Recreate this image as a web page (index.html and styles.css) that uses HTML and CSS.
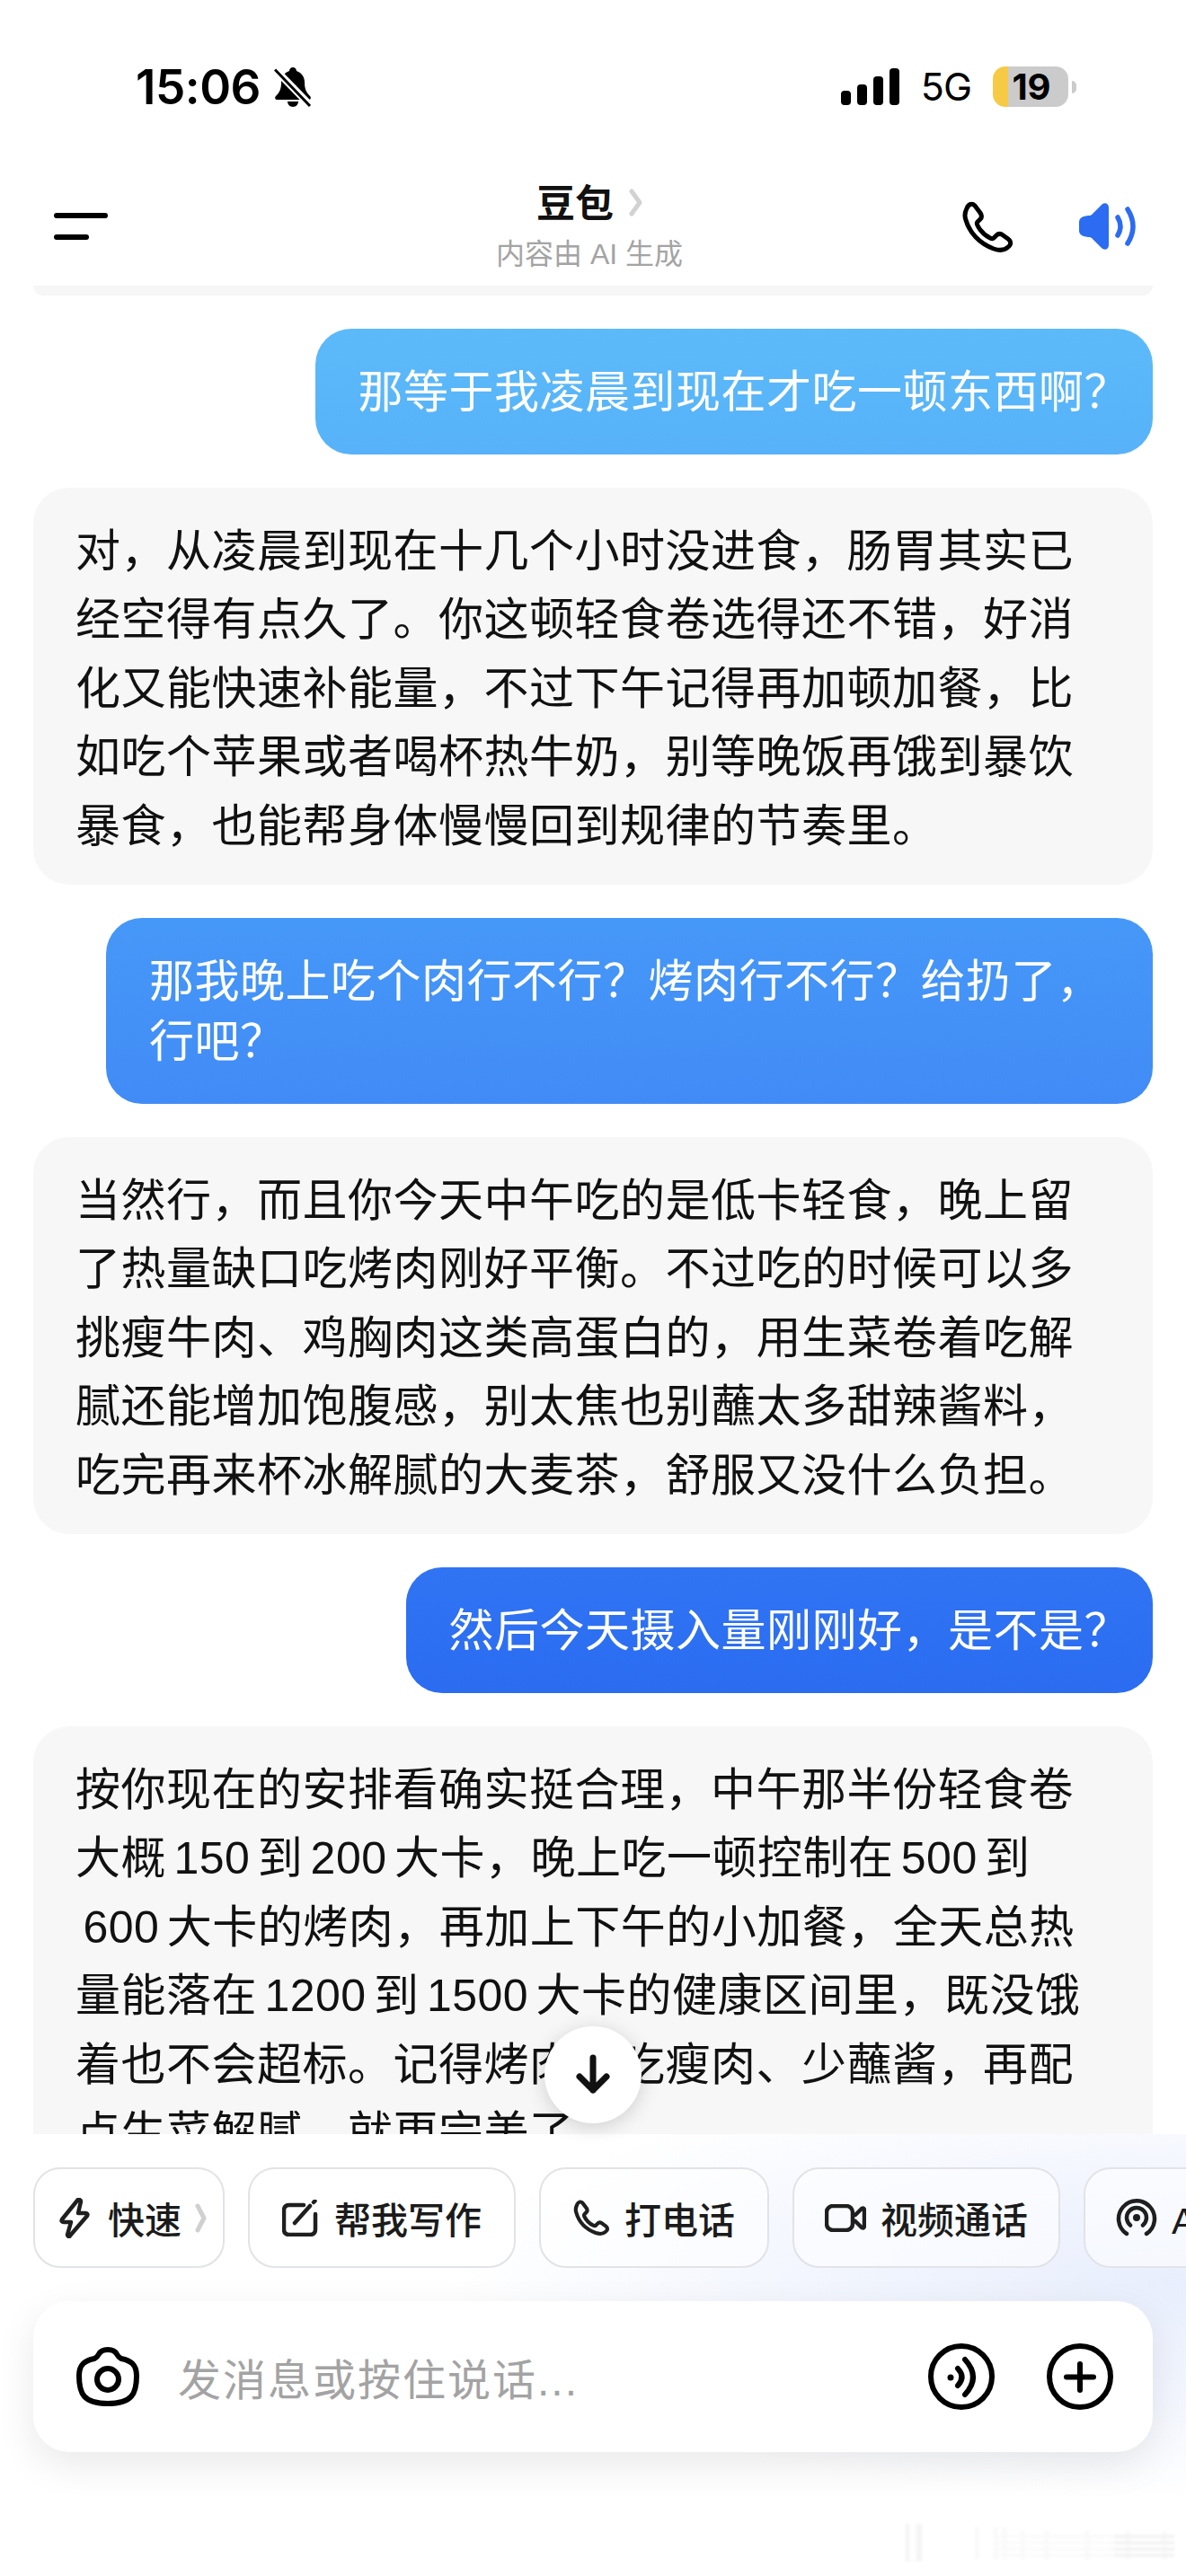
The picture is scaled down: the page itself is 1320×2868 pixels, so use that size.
FILE: index.html
```html
<!DOCTYPE html>
<html lang="zh-CN">
<head>
<meta charset="utf-8">
<title>豆包</title>
<link rel="stylesheet" href="styles.css">
</head>
<body>
<div class="screen">
  <div class="status">
    <div class="status-left">
      <span class="time">15:06</span>
      <svg class="bell" viewBox="0 0 42 44">
        <path d="M21 0c-2.500 0-4 2-4 4-6 2-9 7-9 13 0 7-2 11-6 15-1.500 1.500-1 4 1.500 4h35c2.500 0 3-2.500 1.500-4-4-4-6-8-6-15 0-6-3-11-9-13 0-2-1.500-4-4-4z"/>
        <path d="M15 38h12c0 3-2.500 6-6 6s-6-3-6-6z"/>
        <path class="bell-gap" d="M2 3L40 42"/>
        <path class="bell-line" d="M1 2.500L40 43"/>
      </svg>
    </div>
    <div class="status-right">
      <div class="signal"><i class="s1"></i><i class="s2"></i><i class="s3"></i><i class="s4"></i></div>
      <span class="net">5G</span>
      <div class="battery"><span>19</span></div>
      <i class="nub"></i>
    </div>
  </div>

  <header class="header">
    <div class="menu"><i class="menu-long"></i><i class="menu-short"></i></div>
    <div class="title-block">
      <div class="title"><span>豆包</span>
        <svg class="title-chev" viewBox="0 0 15 31"><path d="M3 3L12 15.500L3 28"/></svg>
      </div>
      <div class="subtitle">内容由 AI 生成</div>
    </div>
    <div class="header-actions">
      <svg class="phone" viewBox="0 0 59 57"><path d="M6 8C8 3 12 2 15 5L21 13C23 16 23 18 21 20L18 23C17 24 17 25 18 27C21 33 26 38 32 41C34 42 35 42 36 41L39 38C41 36 43 36 45 37L52 42C56 45 55 49 52 51C48 55 42 55 36 53C20 47 9 35 5 21C3 16 4 12 6 8Z"/></svg>
      <svg class="speaker" viewBox="0 0 63 52">
        <path class="sp-fill" d="M33 5C33 0 28-1 25 2L14 13C13 14 12 14 10 14L5 15C2 16 0 18 0 21V31C0 34 2 36 5 37L10 38C12 38 13 38 14 39L25 50C28 53 33 52 33 47Z"/>
        <path class="sp-wave" d="M43 16Q49 26 43 36"/>
        <path class="sp-wave" d="M54 7Q66 26 54 45"/>
      </svg>
    </div>
  </header>

  <main class="chat">
    <div class="prev-tail"></div>
    <div class="msg user u1">那等于我凌晨到现在才吃一顿东西啊？</div>
    <div class="msg bot">对，从凌晨到现在十几个小时没进食，肠胃其实已<br>经空得有点久了。你这顿轻食卷选得还不错，好消<br>化又能快速补能量，不过下午记得再加顿加餐，比<br>如吃个苹果或者喝杯热牛奶，别等晚饭再饿到暴饮<br>暴食，也能帮身体慢慢回到规律的节奏里。</div>
    <div class="msg user u2">那我晚上吃个肉行不行？烤肉行不行？给扔了，<br>行吧？</div>
    <div class="msg bot">当然行，而且你今天中午吃的是低卡轻食，晚上留<br>了热量缺口吃烤肉刚好平衡。不过吃的时候可以多<br>挑瘦牛肉、鸡胸肉这类高蛋白的，用生菜卷着吃解<br>腻还能增加饱腹感，别太焦也别蘸太多甜辣酱料，<br>吃完再来杯冰解腻的大麦茶，舒服又没什么负担。</div>
    <div class="msg user u3">然后今天摄入量刚刚好，是不是？</div>
    <div class="msg bot">按你现在的安排看确实挺合理，中午那半份轻食卷<br>大概 150 到 200 大卡，晚上吃一顿控制在 500 到<br>&nbsp;600 大卡的烤肉，再加上下午的小加餐，全天总热<br>量能落在 1200 到 1500 大卡的健康区间里，既没饿<br>着也不会超标。记得烤肉多吃瘦肉、少蘸酱，再配<br>点生菜解腻，就更完美了。</div>
  </main>

  <div class="scroll-down">
    <svg viewBox="0 0 40 46"><path d="M20 4V40M5 25L20 40L35 25"/></svg>
  </div>

  <footer class="panel">
    <div class="chips">
      <div class="chip chip-first">
        <svg class="ic ic-bolt" viewBox="0 0 34 45"><path d="M20 3L3 24C2 26 3 27 5 27H13L9 41C9 43 11 44 12 42L31 20C32 18 31 17 29 17H21L24 4C24 2 21 1 20 3Z"/></svg>
        <span>快速</span>
        <svg class="chip-chev" viewBox="0 0 13 33"><path d="M3 3L10 16.500L3 30"/></svg>
      </div>
      <div class="chip">
        <svg class="ic ic-edit" viewBox="0 0 42 41"><path d="M24 6H8C4 6 2 8 2 12V33C2 37 4 39 8 39H31C35 39 37 37 37 33V16M14 26L31 7M35 3L36.500 1.500"/></svg>
        <span>帮我写作</span>
      </div>
      <div class="chip">
        <svg class="ic ic-phone" viewBox="0 0 59 57"><path d="M6 8C8 3 12 2 15 5L21 13C23 16 23 18 21 20L18 23C17 24 17 25 18 27C21 33 26 38 32 41C34 42 35 42 36 41L39 38C41 36 43 36 45 37L52 42C56 45 55 49 52 51C48 55 42 55 36 53C20 47 9 35 5 21C3 16 4 12 6 8Z"/></svg>
        <span>打电话</span>
      </div>
      <div class="chip chip-narrow">
        <svg class="ic ic-video" viewBox="0 0 46 31"><rect x="2" y="2" width="29" height="27" rx="7"/><path d="M34 12L41 5C43 4 44 5 44 7V24C44 26 43 27 41 26L34 19"/></svg>
        <span>视频通话</span>
      </div>
      <div class="chip chip-narrow">
        <svg class="ic ic-cast" viewBox="0 0 46 43"><path d="M12 39A20 20 0 1 1 34 39M16 29.500A11 11 0 1 1 30 29.500"/><circle class="cast-dot" cx="23" cy="21" r="4"/></svg>
        <span>AI 播客</span>
      </div>
    </div>

    <div class="composer">
      <svg class="camera" viewBox="0 0 70 66">
        <path d="M20 13C22 12 24 10 25 8C27 4 30 3 35 3C40 3 43 4 45 8C46 10 48 12 50 13C60 15 67 19 67 32C67 52 62 63 35 63C8 63 3 52 3 32C3 19 10 15 20 13Z"/>
        <circle cx="35" cy="36" r="12"/>
      </svg>
      <span class="placeholder">发消息或按住说话...</span>
      <svg class="round-ic voice" viewBox="0 0 74 74">
        <circle cx="37" cy="37" r="34"/>
        <circle class="dot" cx="25" cy="38" r="3.500"/>
        <path d="M33 28Q42 37.500 33 47M41 18Q59 37.500 41 57"/>
      </svg>
      <svg class="round-ic" viewBox="0 0 74 74">
        <circle cx="37" cy="37" r="34"/>
        <path d="M37 23V52M22 37.500H52"/>
      </svg>
    </div>
  </footer>

  <svg class="watermark" viewBox="0 0 320 60">
    <defs><filter id="wm-blur"><feGaussianBlur stdDeviation="1.500"/></filter></defs>
    <g filter="url(#wm-blur)">
      <path class="wm-halo" d="M8 2H26V44H8Z"/>
      <path class="wm-core" d="M12 2H20V43H12Z"/>
      <path class="wm-bars" d="M87 6V42M108 6V42M118 6V42M138 10V42M165 10V42M210 10V42M255 10V42M296 10V42"/>
      <path class="wm-lines-faint" d="M107 16H240M107 23H240M107 30H240M107 37H240"/>
      <path class="wm-lines" d="M240 16H307M240 23H307M240 30H307M240 37H307"/>
    </g>
  </svg>
</div>
</body>
</html>
```

FILE: styles.css
```css
* { box-sizing: border-box; }

html, body {
  margin: 0;
  padding: 0;
  background: #fff;
}

body {
  font-family: "Liberation Sans", "Noto Sans CJK SC", sans-serif;
  color: #111;
}

.screen {
  position: relative;
  width: 1320px;
  height: 2868px;
  overflow: hidden;
  display: flex;
  flex-direction: column;
  background: #fff;
}

/* status bar */
.status {
  height: 190px;
  flex: none;
  display: flex;
  justify-content: space-between;
  align-items: flex-start;
  padding: 74px 122px 0 151px;
}

.status-left {
  display: flex;
  align-items: center;
  gap: 15px;
}

.time {
  font-family: Inter, sans-serif;
  font-size: 53px;
  line-height: 46px;
  font-weight: 600;
  letter-spacing: -0.500px;
  color: #000;
}

.bell {
  width: 42px;
  height: 44px;
  fill: #000;
}

.bell-gap { stroke: #fff; stroke-width: 8; fill: none; }
.bell-line { stroke: #000; stroke-width: 3; fill: none; }

.status-right {
  display: flex;
  align-items: flex-start;
}

.signal {
  display: flex;
  align-items: flex-end;
  gap: 7.500px;
  height: 41px;
  margin-top: 2px;
}

.signal i {
  display: block;
  width: 10.500px;
  border-radius: 4px;
  background: #000;
}

.s1 { height: 16px; }
.s2 { height: 23px; }
.s3 { height: 32px; }
.s4 { height: 41px; }

.net {
  font-family: Inter, sans-serif;
  font-size: 43px;
  line-height: 45px;
  font-weight: 400;
  margin-left: 24px;
  color: #000;
  letter-spacing: -1px;
}

.battery {
  width: 84px;
  height: 45px;
  margin-left: 24px;
  border-radius: 14px;
  background: linear-gradient(to right, #f6ca45 17px, #cbcbcb 17px);
  text-align: center;
}

.battery span {
  font-family: Inter, sans-serif;
  font-size: 40px;
  line-height: 45px;
  font-weight: 700;
  color: #000;
  margin-left: 2px;
}

.nub {
  display: block;
  width: 5px;
  height: 14px;
  margin: 16px 0 0 4px;
  border-radius: 0 5px 5px 0;
  background: #cbcbcb;
}

/* header */
.header {
  height: 128px;
  flex: none;
  display: grid;
  grid-template-columns: 1fr auto 1fr;
  padding: 0 56px 0 60px;
  background: #fff;
}

.menu {
  display: flex;
  flex-direction: column;
  gap: 18px;
  padding-top: 47px;
}

.menu i {
  display: block;
  height: 6px;
  border-radius: 3px;
  background: #000;
}

.menu-long { width: 60px; }
.menu-short { width: 39px; }

.title-block {
  margin-right: 12px;
  padding-top: 14px;
  text-align: center;
}

.title {
  display: flex;
  justify-content: center;
  align-items: center;
  gap: 17px;
  height: 46px;
  font-size: 43px;
  line-height: 46px;
  font-weight: 700;
  color: #111;
}

.title-chev {
  width: 15px;
  height: 31px;
  margin-top: -4px;
  fill: none;
  stroke: #d2d2d2;
  stroke-width: 5;
  stroke-linecap: round;
  stroke-linejoin: round;
}

.subtitle {
  margin-top: 15px;
  font-size: 32px;
  line-height: 36px;
  color: #a4a4a4;
}

.header-actions {
  display: flex;
  justify-content: flex-end;
  align-items: flex-start;
  gap: 72px;
  padding-top: 34px;
}

.phone {
  width: 59px;
  height: 57px;
  fill: none;
  stroke: #000;
  stroke-width: 5;
  stroke-linejoin: round;
}

.speaker {
  width: 63px;
  height: 52px;
  margin-top: 2px;
}

.sp-fill { fill: #2c6cf2; }

.sp-wave {
  fill: none;
  stroke: #2c6cf2;
  stroke-width: 5.500;
  stroke-linecap: round;
}

/* chat */
.chat {
  height: 2058px;
  flex: none;
  overflow: hidden;
  display: flex;
  flex-direction: column;
  align-items: flex-end;
  gap: 37px;
  padding: 0 37px;
}

.prev-tail {
  flex: none;
  width: 100%;
  height: 11px;
  border-radius: 0 0 36px 36px;
  background: #f6f6f6;
}

.msg {
  flex: none;
  font-size: 50px;
  letter-spacing: 0.500px;
  white-space: nowrap;
}

.bot {
  width: 100%;
  padding: 33px 47px 27px;
  line-height: 76.400px;
  word-spacing: -6px;
  border-radius: 40px;
  background: #f7f7f7;
  color: #111;
}

.user {
  padding: 38px 26px 35px 48px;
  line-height: 67px;
  border-radius: 40px;
  color: #fff;
}

.u1 { background: linear-gradient(#5cbaf9, #57b2f9); }
.u2 { width: 1165px; background: linear-gradient(#4698f8, #418bf6); }
.u3 { background: linear-gradient(#3074f3, #2b6cf1); }

/* scroll button */
.scroll-down {
  position: absolute;
  left: 606px;
  top: 2256px;
  width: 108px;
  height: 108px;
  display: flex;
  align-items: center;
  justify-content: center;
  border-radius: 50%;
  background: #fff;
  box-shadow: 0 4px 22px rgba(0, 0, 0, 0.16);
}

.scroll-down svg {
  width: 40px;
  height: 46px;
  fill: none;
  stroke: #111;
  stroke-width: 7;
  stroke-linecap: round;
  stroke-linejoin: round;
}

/* bottom panel */
.panel {
  flex: 1;
  padding: 37px 37px 0;
  overflow: hidden;
  background:
    radial-gradient(ellipse 820px 240px at 100% 34%, #e8eefd 0%, rgba(232, 238, 253, 0.5) 55%, rgba(232, 238, 253, 0) 100%),
    #fff;
}

.chips {
  display: flex;
  gap: 26px;
  width: 1400px;
}

.chip {
  flex: none;
  height: 112px;
  display: flex;
  align-items: center;
  padding: 0 36px;
  border: 2px solid #e2e3e7;
  border-radius: 30px;
  background: rgba(255, 255, 255, 0.55);
  font-size: 41px;
  font-weight: 500;
  color: #1b1b1b;
  white-space: nowrap;
}

.chip-first {
  padding: 0 18px 0 27px;
}

.chip-narrow {
  padding: 0 34px;
}

.ic {
  flex: none;
  margin-right: 16px;
  fill: none;
  stroke: #1f1f1f;
  stroke-width: 4.500;
  stroke-linecap: round;
  stroke-linejoin: round;
}

.ic-bolt { width: 34px; height: 45px; margin-right: 20px; }
.ic-edit { width: 42px; height: 41px; }
.ic-phone { width: 41px; height: 48px; stroke-width: 6; }
.ic-video { width: 46px; height: 31px; }
.ic-cast { width: 46px; height: 43px; }
.cast-dot { fill: #1f1f1f; stroke: none; }

.chip-chev {
  width: 13px;
  height: 33px;
  margin-left: 15px;
  fill: none;
  stroke: #d0d0d0;
  stroke-width: 5;
  stroke-linecap: round;
  stroke-linejoin: round;
}

.composer {
  display: flex;
  align-items: center;
  height: 168px;
  margin-top: 37px;
  padding: 0 44px 0 48px;
  border-radius: 40px;
  background: #fff;
  box-shadow: 0 14px 44px rgba(0, 0, 0, 0.09);
}

.camera {
  width: 70px;
  height: 66px;
  flex: none;
  fill: none;
  stroke: #000;
  stroke-width: 6;
}

.placeholder {
  flex: 1;
  margin: 0 0 0 43px;
  font-size: 48px;
  letter-spacing: 2px;
  color: #a3a3a3;
}

.round-ic {
  width: 74px;
  height: 74px;
  flex: none;
  margin-left: 58px;
  fill: none;
  stroke: #000;
  stroke-width: 6;
  stroke-linecap: round;
}

.dot {
  fill: #000;
  stroke: none;
}

/* faint residue in the bottom corner */
.watermark {
  position: absolute;
  left: 1000px;
  top: 2808px;
  width: 320px;
  height: 60px;
  pointer-events: none;
}

.wm-halo { fill: #f4f4f4; }
.wm-core { fill: #fff; }
.wm-bars { stroke: #f9f9f9; stroke-width: 5; fill: none; }
.wm-lines-faint { stroke: #fafafa; stroke-width: 3; fill: none; }
.wm-lines { stroke: #f0f0f0; stroke-width: 3; fill: none; }
```
